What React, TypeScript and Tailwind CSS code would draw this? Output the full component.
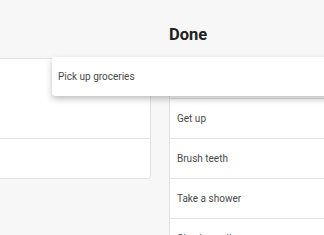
import React from "react";

const doneItems = ["Get up", "Brush teeth", "Take a shower", "Check email"];

export default function App() {
    return (
        <div
            className="relative w-[324px] h-[235px] overflow-hidden bg-[#f7f7f7]"
            style={{ fontFamily: "Roboto, 'Liberation Sans', sans-serif" }}
        >
            <div className="flex gap-[18px] -ml-[20px]">
                <div className="w-[171px] shrink-0">
                    <div className="h-[58px]" />
                    <div className="bg-white border border-[#e3e3e3] rounded-[3px]">
                        <div className="h-[80px] border-b border-[#e3e3e3]" />
                        <div className="h-[39px]" />
                    </div>
                </div>
                <div className="w-[220px] shrink-0">
                    <h2 className="h-[58px] pt-[23px] text-[16.5px] leading-[24px] font-bold text-[#212121]">
                        Done
                    </h2>
                    <div className="bg-white border border-[#e3e3e3] rounded-[3px]">
                        <div className="h-[40px] border-b border-[#e3e3e3]" />
                        {doneItems.map((item) => (
                            <div
                                key={item}
                                className="h-[40px] flex items-center px-[7px] border-b border-[#e3e3e3] text-[10px] text-[#4a4a4a]"
                            >
                                {item}
                            </div>
                        ))}
                    </div>
                </div>
            </div>

            <div className="absolute left-[52px] top-[57px] w-[300px] h-[39px] bg-white rounded-[3px] shadow-[0_3px_6px_rgba(0,0,0,0.25)] flex items-center px-[6px] text-[10px] text-[#4a4a4a]">
                Pick up groceries
            </div>
        </div>
    );
}
